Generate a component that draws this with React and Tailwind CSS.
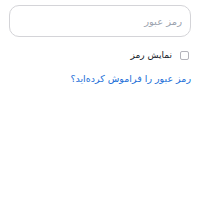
export default function App() {
  return (
    <div dir="rtl" className="w-[200px] h-[200px] bg-white px-[9px] pt-[5px]" style={{ fontFamily: '"DejaVu Sans", sans-serif' }}>
      <input
        type="password"
        placeholder="رمز عبور"
        className="block w-full h-[32px] rounded-[10px] border border-[#d4d4d8] px-[8px] text-[10px] text-[#374151] placeholder:text-[#9ca3af] outline-none"
      />
      <label className="mt-[12px] flex items-center gap-[8px] pr-[2px]">
        <span className="w-[9px] h-[9px] rounded-[2px] border border-[#b4b4bb] bg-white"></span>
        <span className="text-[9px] text-[#111827]">نمایش رمز</span>
      </label>
      <a href="#" className="block mt-[9px] text-[9.5px] text-[#1d6fd8]">رمز عبور را فراموش کرده‌اید؟</a>
    </div>
  );
}
